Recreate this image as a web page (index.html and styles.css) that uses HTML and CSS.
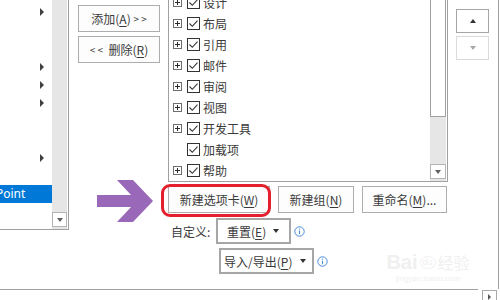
FILE: index.html
```html
<!DOCTYPE html>
<html lang="zh-CN">
<head>
  <meta charset="UTF-8">
  <title>自定义功能区</title>
  <link rel="stylesheet" href="styles.css">
</head>
<body>
<svg class="defs" width="0" height="0">
  <symbol id="plus" viewBox="0 0 9 9">
    <rect x=".5" y=".5" width="8" height="8" fill="#fff" stroke="#6f6f6f"/>
    <path d="M2 4.5h5M4.5 2v5" stroke="#2b2b2b"/>
  </symbol>
  <symbol id="check" viewBox="0 0 13 13">
    <rect x=".5" y=".5" width="12" height="12" fill="#fff" stroke="#333"/>
    <path d="M2.5 6.5l2.8 2.8 5.2-5.6" fill="none" stroke="#333" stroke-width="1.1"/>
  </symbol>
  <symbol id="info" viewBox="0 0 11 11">
    <circle cx="5.5" cy="5.5" r="4.7" fill="none" stroke="#4a8ad8"/>
    <path d="M5.5 4.6v3.6" stroke="#4a8ad8" stroke-width="1.1"/>
    <circle cx="5.5" cy="3.1" r=".7" fill="#4a8ad8"/>
  </symbol>
</svg>

<div class="main">
  <!-- 左侧命令列表 -->
  <div class="cmd-list">
    <div class="cmd-rows">
      <div class="cmd-row"><span class="tri"></span></div>
      <div class="cmd-row"></div>
      <div class="cmd-row"></div>
      <div class="cmd-row"><span class="tri"></span></div>
      <div class="cmd-row"><span class="tri"></span></div>
      <div class="cmd-row"><span class="tri"></span></div>
      <div class="cmd-row"></div>
      <div class="cmd-row"></div>
      <div class="cmd-row"><span class="tri"></span></div>
      <div class="cmd-row"></div>
      <div class="cmd-row sel"><span>Point</span></div>
    </div>
    <div class="vscroll cmd-scroll">
      <div class="track"></div>
      <div class="sbtn"><span class="caret-down"></span></div>
    </div>
  </div>

  <!-- 添加 / 删除 -->
  <div class="move-btns">
    <button class="btn">添加(<u>A</u>)&nbsp; <span class="chev">&gt; &gt;</span></button>
    <button class="btn"><span class="chev">&lt; &lt;</span>&nbsp; 删除(<u>R</u>)</button>
  </div>

  <!-- 主选项卡 -->
  <div class="tab-side">
    <div class="tree">
      <ul class="tree-items">
        <li><svg class="plus"><use href="#plus"/></svg><svg class="chk"><use href="#check"/></svg><span>设计</span></li>
        <li><svg class="plus"><use href="#plus"/></svg><svg class="chk"><use href="#check"/></svg><span>布局</span></li>
        <li><svg class="plus"><use href="#plus"/></svg><svg class="chk"><use href="#check"/></svg><span>引用</span></li>
        <li><svg class="plus"><use href="#plus"/></svg><svg class="chk"><use href="#check"/></svg><span>邮件</span></li>
        <li><svg class="plus"><use href="#plus"/></svg><svg class="chk"><use href="#check"/></svg><span>审阅</span></li>
        <li><svg class="plus"><use href="#plus"/></svg><svg class="chk"><use href="#check"/></svg><span>视图</span></li>
        <li><svg class="plus"><use href="#plus"/></svg><svg class="chk"><use href="#check"/></svg><span>开发工具</span></li>
        <li><span class="no-plus"></span><svg class="chk"><use href="#check"/></svg><span>加载项</span></li>
        <li><svg class="plus"><use href="#plus"/></svg><svg class="chk"><use href="#check"/></svg><span>帮助</span></li>
      </ul>
      <div class="vscroll tree-scroll">
        <div class="thumb"></div>
        <div class="track"></div>
        <div class="sbtn"><span class="caret-down"></span></div>
      </div>
    </div>

    <div class="tab-btns">
      <button class="btn w-new-tab">新建选项卡(<u>W</u>)</button>
      <button class="btn w-new-group">新建组(<u>N</u>)</button>
      <button class="btn w-rename">重命名(<u>M</u>)...</button>
    </div>

    <div class="custom-row">
      <span class="label">自定义:</span>
      <div class="drop drop-reset"><span>重置(<u>E</u>)</span><span class="caret"></span></div>
      <svg class="info"><use href="#info"/></svg>
    </div>
    <div class="custom-row indent">
      <div class="drop drop-io"><span>导入/导出(<u>P</u>)</span><span class="caret"></span></div>
      <svg class="info"><use href="#info"/></svg>
    </div>
  </div>

  <!-- 上移 / 下移 -->
  <div class="order-btns">
    <div class="obtn"><span class="caret-up"></span></div>
    <div class="obtn off"><span class="caret-down"></span></div>
  </div>

  <div class="edge"></div>
</div>

<div class="bottom">
  <div class="hline"></div>
  <div class="hbtn"><span class="caret-right"></span></div>
</div>

<!-- 标注 -->
<svg class="pointer" width="57" height="43" viewBox="0 0 57 43">
  <polygon points="0,15 34,15 20,0 36,0 56,21 36,42 20,42 34,27 0,27" fill="#9a68b8"/>
</svg>
<div class="highlight"></div>

<div class="watermark">
  <div class="wm-line"><span class="wm-bai">Bai</span><span class="wm-du">du</span><span class="wm-jy">经验</span></div>
  <div class="wm-url">jingyan.baidu.com</div>
</div>
</body>
</html>
```

FILE: styles.css
```css
html, body {
    margin: 0;
    padding: 0;
}
body {
    width: 500px;
    height: 300px;
    overflow: hidden;
    position: relative;
    background: #fff;
    font-family: "Noto Sans CJK SC", "Noto Sans", sans-serif;
    font-size: 12px;
    color: #3a3a3a;
}
.defs {
    position: absolute;
}
u {
    text-decoration-thickness: 1px;
    text-underline-offset: 2px;
}
.main {
    display: flex;
    height: 289px;
}

/* 左侧列表 */
.cmd-list {
    width: 68px;
    height: 229px;
    border-right: 1px solid #a0a0a0;
    border-bottom: 1px solid #a0a0a0;
    display: flex;
}
.cmd-rows {
    width: 52px;
    padding-top: 3px;
    overflow: hidden;
}
.cmd-row {
    height: 18.2px;
    box-sizing: border-box;
    display: flex;
    align-items: center;
    justify-content: flex-end;
    padding-right: 8px;
}
.cmd-row.sel {
    background: #0078d7;
    color: #fff;
    justify-content: flex-start;
    padding: 0;
    font-family: "Noto Sans", sans-serif;
}
.cmd-row.sel span {
    margin-left: -4px;
}
.tri {
    border-left: 4px solid #404040;
    border-top: 4px solid transparent;
    border-bottom: 4px solid transparent;
}

.vscroll {
    display: flex;
    flex-direction: column;
    background: #e6e6e6;
}
.vscroll .track {
    flex: 1;
}
.sbtn {
    height: 15px;
    box-sizing: border-box;
    border: 1px solid #b4b4b4;
    background: #fff;
    margin-bottom: 2px;
    display: flex;
    align-items: center;
    justify-content: center;
}
.cmd-scroll {
    width: 15px;
    margin-right: 1px;
}
.caret-down {
    border-top: 4px solid #606060;
    border-left: 3.5px solid transparent;
    border-right: 3.5px solid transparent;
}
.caret-up {
    border-bottom: 4px solid #333;
    border-left: 3.5px solid transparent;
    border-right: 3.5px solid transparent;
}
.caret-right {
    border-left: 3px solid #555;
    border-top: 3px solid transparent;
    border-bottom: 3px solid transparent;
}

/* 按钮 */
.btn {
    height: 27px;
    box-sizing: border-box;
    border: 1px solid #adadad;
    background: #fdfdfd;
    font: inherit;
    color: inherit;
    padding: 0;
    display: flex;
    align-items: center;
    justify-content: center;
    white-space: nowrap;
}
.chev {
    font-size: 10px;
}
.move-btns {
    margin-left: 9px;
    width: 82px;
    padding-top: 5px;
    display: flex;
    flex-direction: column;
    gap: 4px;
}

/* 右侧树 */
.tab-side {
    margin-left: 8px;
    width: 280px;
}
.tree {
    height: 181px;
    border: 1px solid #a0a0a0;
    border-top: 0;
    display: flex;
    overflow: hidden;
}
.tree-items {
    flex: 1;
    list-style: none;
    margin: -8px 0 0 0;
    padding: 0 0 0 4px;
}
.tree-items li {
    height: 21px;
    display: flex;
    align-items: center;
}
.plus, .no-plus {
    width: 9px;
    height: 9px;
    margin-right: 5px;
    flex: none;
}
.chk {
    width: 13px;
    height: 13px;
    margin-right: 3px;
    flex: none;
}
.tree-scroll {
    width: 16px;
    margin-right: 1px;
}
.tree-scroll .thumb {
    height: 117px;
    box-sizing: border-box;
    background: #fff;
    border: 1px solid #a0a0a0;
    border-top: 0;
}

.tab-btns {
    display: flex;
    gap: 8px;
    margin-top: 4px;
}
.w-new-tab { width: 102px; }
.w-new-group { width: 76px; }
.w-rename { width: 85px; }

.custom-row {
    display: flex;
    align-items: center;
    margin-top: 5px;
}
.custom-row.indent {
    margin-top: 4px;
    padding-left: 51px;
}
.label {
    width: 48px;
    box-sizing: border-box;
    padding-left: 3px;
}
.drop {
    height: 26px;
    box-sizing: border-box;
    border: 2px solid #a6a6a6;
    display: flex;
    align-items: center;
}
.drop .caret {
    margin-left: auto;
    border-top: 4px solid #333;
    border-left: 3.5px solid transparent;
    border-right: 3.5px solid transparent;
}
.drop-reset {
    width: 75px;
    padding: 0 10px 0 9px;
}
.drop-io {
    width: 95px;
    padding: 0 6px 0 3px;
}
.info {
    width: 11px;
    height: 11px;
    margin-left: 3px;
}

/* 上移下移 */
.order-btns {
    margin-left: 8px;
    width: 33px;
    padding-top: 9px;
    display: flex;
    flex-direction: column;
    gap: 3px;
}
.obtn {
    height: 24px;
    box-sizing: border-box;
    border: 1px solid #a6a6a6;
    display: flex;
    align-items: center;
    justify-content: center;
}
.obtn.off {
    border-color: #dadada;
}
.obtn.off .caret-down {
    border-top-color: #a8a8a8;
}
.edge {
    margin-left: 9px;
    width: 1px;
    background: #a0a0a0;
}

.bottom {
    display: flex;
}
.hline {
    width: 478px;
    border-top: 1px solid #a0a0a0;
}
.hbtn {
    margin: 1px 0 0 4px;
    width: 15px;
    height: 12px;
    box-sizing: border-box;
    border: 1px solid #aaa;
    border-bottom: 0;
    display: flex;
    align-items: center;
    justify-content: center;
}

/* 标注层 */
.pointer {
    position: absolute;
    left: 97px;
    top: 180px;
}
.highlight {
    position: absolute;
    left: 161px;
    top: 184px;
    width: 110px;
    height: 33px;
    box-sizing: border-box;
    border: 3px solid #e5202e;
    border-radius: 9px;
}
.watermark {
    position: absolute;
    left: 383px;
    top: 252px;
    width: 90px;
    color: #f0f0f0;
    font-family: "Liberation Sans", sans-serif;
    text-align: center;
    line-height: 1;
}
.wm-bai {
    font-size: 20px;
    font-weight: bold;
}
.wm-du {
    display: inline-block;
    font-size: 9px;
    border: 1px solid #f0f0f0;
    border-radius: 50%;
    padding: 1px 2px;
    margin: 0 2px;
    vertical-align: 4px;
}
.wm-jy {
    font-family: "Noto Sans CJK SC", sans-serif;
    font-size: 16px;
}
.wm-url {
    font-size: 8px;
    margin-top: 3px;
}
```
